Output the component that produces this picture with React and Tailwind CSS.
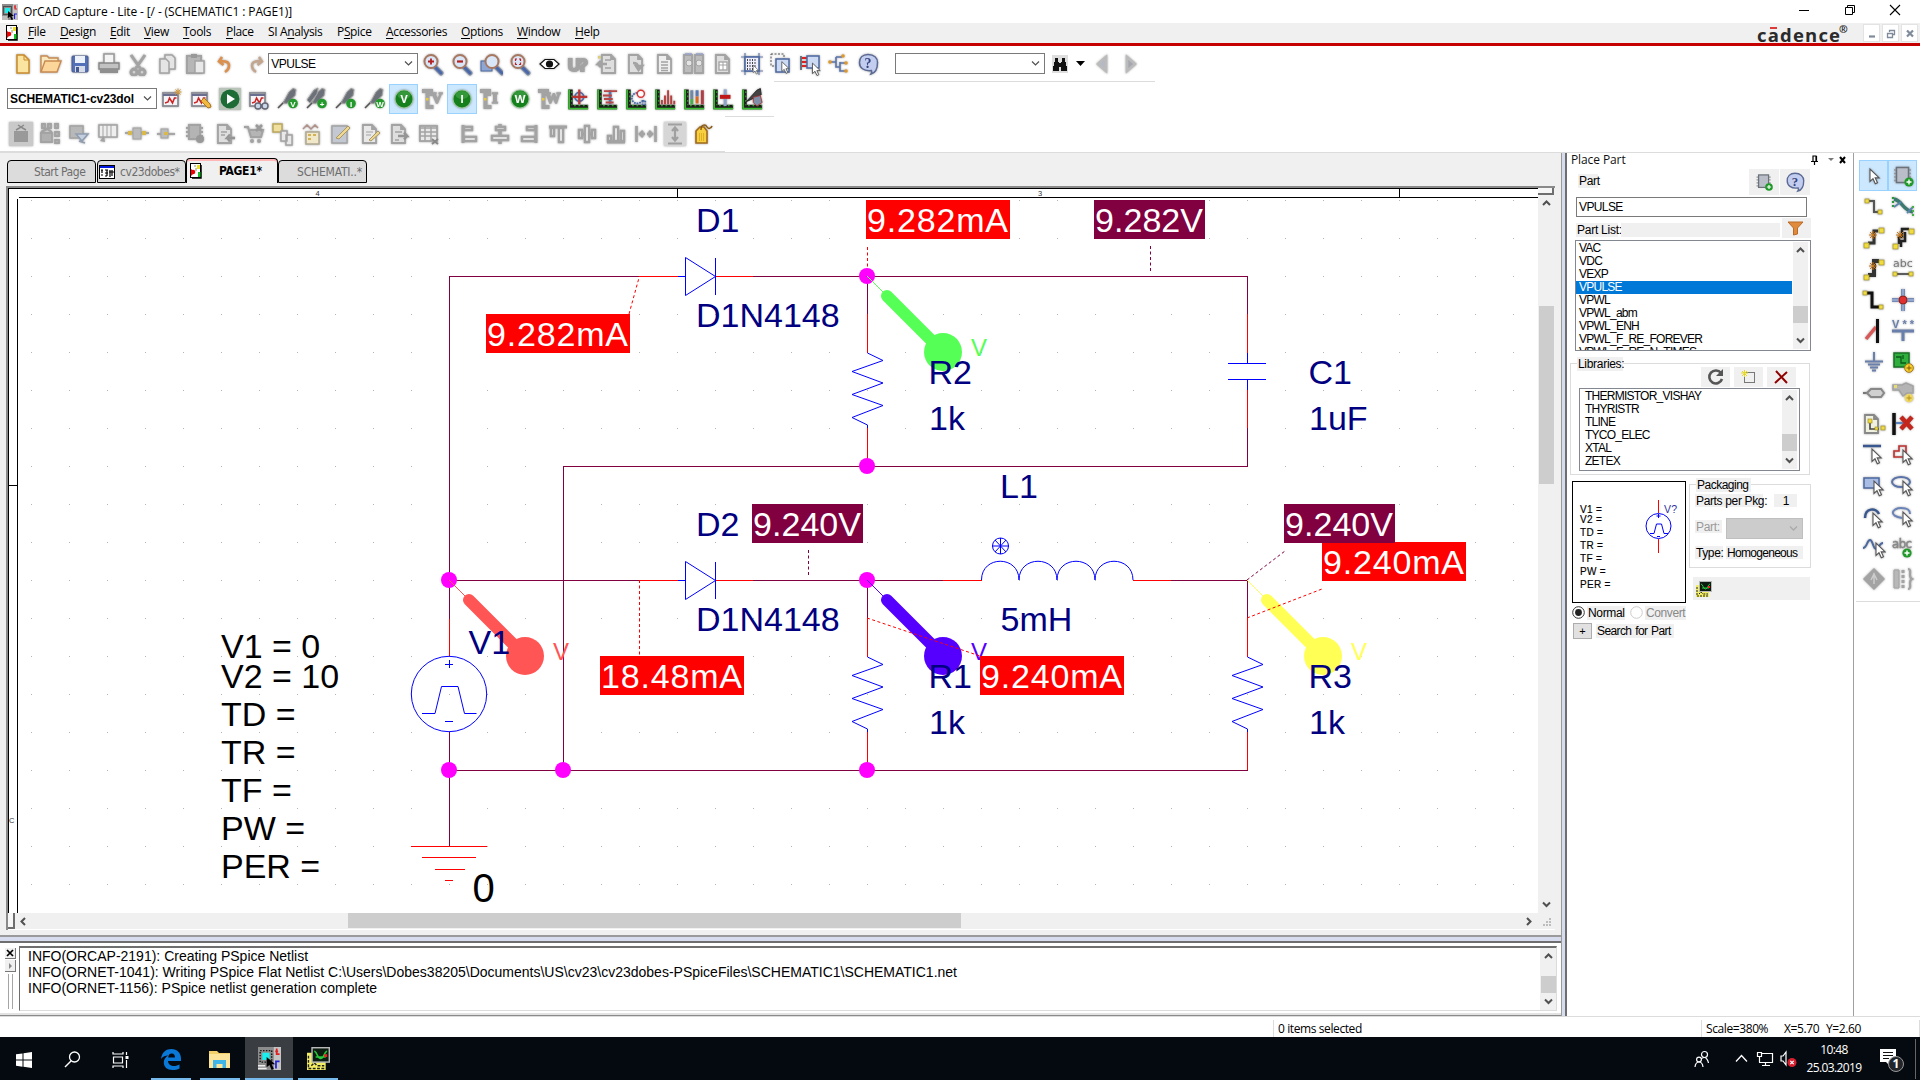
import React from "react";

const G = "#a3a3a3";
const L = "#d0d0d0";

function Svg({ w = 24, h = 24, children, className = "" }) {
  return (
    <svg width={w} height={h} viewBox={`0 0 ${w} ${h}`} fill="none" className={`block shrink-0 ${className}`}>
      {children}
    </svg>
  );
}

/* ---------- shared glyph pieces ---------- */
const Page = ({ f = "#dedede", s = G, x = 0 }) => (
  <path d={`M${5 + x} 3h9l4 4v14h-13zM${14 + x} 3v4h4`} fill={f} stroke={s} strokeWidth="1.800" />
);
const Lens = ({ children }) => (
  <>
    <path d="M14 15l6 6" stroke="#8a94a8" strokeWidth="5" strokeLinecap="round" />
    <path d="M14 15l6 6" stroke="#4a68a8" strokeWidth="3" strokeLinecap="round" />
    <circle cx="10" cy="9.500" r="6.500" fill="#d8e6f8" stroke="#a87860" strokeWidth="2" />
    {children}
  </>
);
const Axes = ({ children }) => (
  <g transform="translate(1 1.500) scale(.88)">
    <path d="M4 1v20H24" stroke="#1c1c1c" strokeWidth="5" />
    <path d="M2.500 1v22H24" stroke="#3db832" strokeWidth="2" />
    <path d="M5.500 3v16M8 19.500h16" stroke="#2fa028" strokeWidth="1.500" strokeDasharray="2 3" />
    {children}
  </g>
);
const Wave = ({ children }) => (
  <>
    <rect x="3" y="6" width="15" height="13" fill="#f4f4f8" stroke="#8b8b93" strokeWidth="1.800" />
    <path d="M3 8h15" stroke="#6a6f8f" strokeWidth="2" />
    <path d="M5 16l3-1 1.500-4 3 5 2-5h2" stroke="#c22" strokeWidth="1.500" />
    {children}
  </>
);
const Probe = ({ t, dbl }) => (
  <>
    <path d="M2 21l9-9" stroke="#555" strokeWidth="1.600" />
    <path d="M7 16l6-11 4-3.500 3 1-1 6-8 8z" fill="#6c7078" stroke="#a0a0a0" />
    {dbl && <path d="M2 13l7-10 4-2-1 6-7 9z" fill="#6c7078" stroke="#a0a0a0" />}
    <circle cx="17" cy="16.500" r="4.800" fill="#259a2c" />
    <text x="17" y="19.500" textAnchor="middle" fontSize="8" fontWeight="bold" fontFamily="Liberation Sans" fill="#fff">{t}</text>
  </>
);
const Ball = ({ t }) => (
  <>
    <circle cx="12" cy="12" r="9.500" fill="#9cc79c" />
    <circle cx="12" cy="12" r="8.500" fill="#15801c" />
    <ellipse cx="12" cy="8" rx="6.500" ry="4" fill="#4aa74f" opacity=".6" />
    <text x="12" y="16" textAnchor="middle" fontSize="11" fontWeight="bold" fontFamily="Open Sans" fill="#fff">{t}</text>
  </>
);
const GrayProbe = ({ t }) => (
  <>
    <path d="M1 4h9v5M6.500 4v16h6" stroke={G} strokeWidth="4" />
    <text x="16" y="16" textAnchor="middle" fontSize="15" fontWeight="bold" fontFamily="Liberation Serif" fill={G} stroke={G} strokeWidth="1.500">{t}</text>
    <rect x="5" y="11" width="2.500" height="2.500" fill="#e8c840" />
  </>
);
const Cursor = ({ x = 10, y = 8 }) => (
  <path transform={`translate(${x} ${y})`} d="M0 0v12.500l3-2.800 2.300 5 2.200-1-2.300-4.800h4z" fill="#fff" stroke="#555" strokeWidth="1.100" />
);
const Chip = () => (
  <>
    <path d="M3 6h17M3 9.500h17M3 13h17M3 16.500h17" stroke="#999" strokeWidth="1.500" />
    <rect x="5.500" y="3.500" width="12" height="15" fill="#b9bec8" stroke="#6c727c" strokeWidth="1.500" />
  </>
);
const Plus = ({ x = 18, y = 18 }) => (
  <>
    <circle cx={x} cy={y} r="4.600" fill="#1f9a28" />
    <path d={`M${x - 2.500} ${y}h5M${x} ${y - 2.500}v5`} stroke="#fff" strokeWidth="1.400" />
  </>
);
const Help = () => (
  <>
    <path d="M12 2.500c6 0 9.500 3.500 9.500 8 0 5-1 10-6.500 11.500 1-1.500 1-2.500.5-3.500-8 1-12-3-12-8 0-4.500 3-8 8.500-8z" fill="#c3cdf0" stroke="#5a6a94" strokeWidth="1.500" />
    <text x="12" y="16" textAnchor="middle" fontSize="14" fontWeight="bold" fontFamily="Liberation Serif" fill="#33457c">?</text>
  </>
);
const Dot = ({ x, y, s = 4 }) => <rect x={x} y={y} width={s} height={s} fill="#f0dc3c" stroke="#a09030" strokeWidth=".7" />;
const Spark = ({ x, y }) => (
  <path d={`M${x - 4} ${y}h8M${x} ${y - 4}v8M${x - 3} ${y - 3}l6 6M${x + 3} ${y - 3}l-6 6`} stroke="#c87818" strokeWidth="1" />
);
const Star = ({ x, y }) => (
  <path d={`M${x - 3.500} ${y}h7M${x} ${y - 3.500}v7M${x - 2.500} ${y - 2.500}l5 5M${x + 2.500} ${y - 2.500}l-5 5`} stroke="#d59a3a" strokeWidth="1" />
);

const row1a = [
  <><path d="M7 3h7l5 5v13H7z" fill="#fbe3a0" stroke="#c98a2a" strokeWidth="1.500" /><path d="M14 3v5h5" stroke="#c98a2a" /></>,
  <><path d="M2 20V4h6l2 2h9v4" fill="#f8e8c0" stroke="#c88a50" strokeWidth="1.400" /><path d="M2 20l4-11h16l-4 11z" fill="#fcd59a" stroke="#c88a50" strokeWidth="1.400" /></>,
  <><rect x="4" y="4" width="16" height="16" rx="1" fill="#5470b8" stroke="#4a5a8c" /><rect x="7" y="4" width="10" height="7" fill="#eef2fa" /><rect x="7" y="14" width="10" height="6" fill="#d8dce8" /><rect x="8" y="15" width="3" height="5" fill="#44598e" /></>,
  <><path d="M7 11V2h10v9" fill="#f4f4f4" stroke="#999" strokeWidth="1.500" /><path d="M2 11h20v6H2z" fill="#c2c2c2" stroke="#858585" strokeWidth="1.300" /><path d="M3 17h18v4H3z" fill="#8f8f8f" /></>,
  <path d="M5 3l9 13M19 3L10 16M10 18a3 3 0 1 1-4 0 3 3 0 0 1 4 0M18 18a3 3 0 1 1-4 0 3 3 0 0 1 4 0" stroke={G} strokeWidth="3" />,
  <><path d="M10 3h7l3 3v11H10z" fill="#e4e4e4" stroke={G} strokeWidth="1.500" /><path d="M5 7h6l3 3v11H5z" fill="#e4e4e4" stroke={G} strokeWidth="1.500" /></>,
  <><rect x="3" y="4" width="14" height="17" fill="#b6b6b6" stroke={G} strokeWidth="2" /><rect x="7" y="2" width="6" height="4" fill="#999" /><path d="M11 9h9v12h-9z" fill="#e8e8e8" stroke={G} strokeWidth="1.500" /></>,
  <path d="M8 5L5 9.500l4.500 3.500M6 9.500c6-1 9 1 9 4 0 3-1.500 5-4 6.500" stroke="#dd8f4c" strokeWidth="2.600" />,
  <path d="M16 5l3 4.500-4.500 3.500M18 9.500c-6-1-9 1-9 4 0 3 1.500 5 4 6.500" stroke="#c4a68e" strokeWidth="2.400" />,
];
const row1b = [
  <Lens><path d="M7 9.500h6M10 6.500v6" stroke="#b32020" strokeWidth="1.800" /></Lens>,
  <Lens><path d="M7 9.500h6" stroke="#b32020" strokeWidth="2.200" /></Lens>,
  <><rect x="2" y="9" width="11" height="10" fill="#8ea6d4" stroke="#4c68a0" /><g transform="translate(3 0)"><Lens /></g></>,
  <Lens><path d="M7.500 9V7H9M11 7h1.500v2M7.500 10.500v2H9M12.500 10.500v2H11" stroke="#c02020" strokeWidth="1.200" /></Lens>,
  <><path d="M3 12l5-4.500h9L22 12l-5 4.500H8z" fill="#fff" stroke="#111" strokeWidth="1.200" /><circle cx="12.500" cy="12" r="3.600" fill="#111" /></>,
  <text x="12" y="19" textAnchor="middle" fontSize="17" fontWeight="bold" fontFamily="Liberation Sans" fill={G} stroke={G} strokeWidth="2.200" textLength="20">U?</text>,
  <><Page x={2} /><path d="M12 12H3l3-3M3 12l3 3" stroke={G} strokeWidth="2.500" /><rect x="3" y="4" width="2.500" height="2.500" fill="#dcd070" /><path d="M10 8h6M10 16h6" stroke={G} strokeWidth="1.600" /></>,
  <><Page /><path d="M9 11c4 0 5 1 5 4M12 14h6l-3.500 4z" stroke={G} fill={G} strokeWidth="2.500" /></>,
  <><Page f="#eee" /><path d="M8 10h7M8 13h7M8 16h7M8 18.500h7" stroke={G} strokeWidth="1.300" /></>,
  <><path d="M2 3h8v18H2zM13 3h8v18h-8z" fill="#bcbcbc" stroke={G} strokeWidth="1.800" /><path d="M3 2h7M14 2h7" stroke="#98a4cc" strokeWidth="1.500" /><circle cx="7" cy="11" r="3" fill="#e4e4e4" stroke={G} /><circle cx="17" cy="11" r="3" fill="#e4e4e4" stroke={G} /></>,
  <><Page /><rect x="8" y="10" width="8" height="8" fill="#fff" stroke={G} strokeWidth="1.300" /><path d="M8 13h8M12 10v8" stroke={G} /></>,
  <><path d="M5 1v22M19 1v22M1 5h22M1 19h22" stroke="#6a7fae" strokeWidth="1.200" /><rect x="5" y="5" width="14" height="14" fill="#eef" stroke="#4c68a0" strokeWidth="1.600" /><path d="M7 8h10M7 11h10M7 14h10M7 17h10" stroke="#111" strokeWidth="1.400" strokeDasharray="1 1.500" /><g transform="scale(.6)"><Cursor x={22} y={22} /></g></>,
  <><rect x="2" y="2" width="13" height="12" stroke="#555" strokeDasharray="2 1.500" /><rect x="7" y="7" width="13" height="13" fill="#ccdaf4" stroke="#4c68a0" strokeWidth="1.500" /><g transform="scale(.8)"><Cursor x={16} y={12} /></g></>,
  <><path d="M3 4v14" stroke="#456" strokeWidth="1.500" /><path d="M4 6h5M4 10h5M4 14h5" stroke="#d22" strokeWidth="2" /><rect x="9" y="4" width="12" height="12" fill="#ccdaf4" stroke="#4c68a0" strokeWidth="1.500" /><g transform="scale(.85)"><Cursor x={17} y={13} /></g></>,
  <><path d="M2 10h7M9 5v10h4M9 5h6M13 10v9h6M13 11h6" stroke="#5a74aa" strokeWidth="1.600" /><g fill="#e0982a"><circle cx="3" cy="10" r="1.800" /><circle cx="16" cy="4" r="1.800" /><circle cx="19" cy="11" r="1.800" /><circle cx="19" cy="19" r="1.800" /></g></>,
  <Help />,
];
const row2 = [
  <><Wave /><Star x={18} y={5} /></>,
  <><Wave /><path d="M12 14l7 7 3-1-1-3-6-6z" fill="#f0b840" stroke="#b07818" /></>,
  <><rect x="1" y="1" width="22" height="22" fill="#b9c4b9" /><circle cx="12" cy="12" r="9.500" fill="#1d6b35" /><path d="M9 7v10l8-5z" fill="#fff" /></>,
  <><Wave /><path d="M8 19a3 3 0 1 0 6 0 3 3 0 1 0-6 0M15 19a3 3 0 1 0 6 0 3 3 0 1 0-6 0" fill="#c8d8e8" stroke="#667" strokeWidth="1.400" /></>,
  <Probe t="V" />,
  <Probe t="+" dbl />,
  <Probe t="I" />,
  <Probe t="W" />,
  <Ball t="V" />,
  <GrayProbe t="V" />,
  <Ball t="I" />,
  <GrayProbe t="I" />,
  <Ball t="W" />,
  <GrayProbe t="W" />,
  <Axes><circle cx="14" cy="9.500" r="5" stroke="#4a6aa8" strokeWidth="2" /><path d="M14 1v17M6 9.500h17" stroke="#b33" strokeWidth="2.600" /></Axes>,
  <Axes><path d="M16 2v16" stroke="#5a74aa" strokeWidth="3" /><path d="M9 3h15M8 8h10M9 12h10M11 16h9" stroke="#b84848" strokeWidth="2.200" /></Axes>,
  <Axes><path d="M14 5a6 6 0 1 0 5 9M20 14v4h3v-4z" stroke="#4a6aa8" strokeWidth="2" strokeDasharray="2 1" /><circle cx="18" cy="6" r="4" fill="#fff" stroke="#d33" strokeWidth="1.600" /></Axes>,
  <Axes><path d="M9 18v-5M12.500 18V8M16 18V2M19.500 18V8M23 18v-4" stroke="#b84040" strokeWidth="2.200" /></Axes>,
  <Axes><path d="M10 2v10" stroke="#7088a8" strokeWidth="3.400" /><path d="M10 12v6" stroke="#48b048" strokeWidth="3.400" /><path d="M16 2v7" stroke="#5a78b0" strokeWidth="3.400" /><path d="M16 9v8" stroke="#d86a20" strokeWidth="3.400" /><path d="M22 2v16" stroke="#b04048" strokeWidth="3.400" /></Axes>,
  <Axes><path d="M15 1v19" stroke="#8fa4c8" strokeWidth="3.400" /><path d="M9 9.500h12" stroke="#c01818" strokeWidth="4.500" /></Axes>,
  <Axes><path d="M6 15L18 2l4-2 1 7z" fill="#444" stroke="#222" /><path d="M14 10l8-2 2 8-6 4-4-4z" fill="#7f8fa8" stroke="#a33" /></Axes>,
];
const row3a = [
  <><rect x="0" y="0" width="24" height="24" fill="#c9c9c9" /><rect x="5" y="9" width="14" height="11" fill="#999" /><path d="M7 8l5-3 5 3M9 3l6 4M15 3L9 7" stroke="#888" strokeWidth="1.500" /></>,
  <><path d="M4 2h3v4H4zM10 2h3v4h-3zM17 2h3v4h-3zM17 10h4v4h-4zM17 18h4v3h-4zM3 11h11v9H3z" fill="#b0b0b0" stroke={G} strokeWidth="1.800" /><path d="M3 10l6-3 5 3" stroke={G} strokeWidth="2" /></>,
  <><rect x="3" y="4" width="13" height="12" fill="#b8b8b8" stroke={G} strokeWidth="1.500" /><path d="M9 12h12l-6 7zM12 19l6 2" fill="#c4d0e0" stroke="#8f9db0" strokeWidth="1.500" /></>,
  <><path d="M3 3h18v12H3z" fill="#eee" stroke={G} strokeWidth="1.500" /><path d="M7 3v12M11 3v12M15 3v12" stroke={G} /><path d="M8 14l-4 5 5 1z" fill={G} /></>,
  <><path d="M0 11h24" stroke={G} strokeWidth="1.800" /><rect x="8" y="6" width="8" height="11" fill="#bbb" stroke={G} /><rect x="3" y="9" width="4" height="4" fill="#d9b94a" /><rect x="17" y="9" width="4" height="4" fill="#d9b94a" /></>,
  <><path d="M3 12h18" stroke={G} strokeWidth="1.800" /><rect x="7" y="7" width="7" height="9" fill="#bbb" stroke={G} /><rect x="10" y="10" width="4" height="3" fill="#d9b94a" /></>,
  <><path d="M3 6h17M3 10h17M3 14h17" stroke={G} strokeWidth="2" /><rect x="6" y="3" width="11" height="14" fill="#b4b4b4" stroke={G} strokeWidth="2" /><circle cx="17" cy="17" r="4" fill="#999" /></>,
  <><Page /><path d="M8 10h6M8 13h4" stroke={G} strokeWidth="1.500" /><path d="M22 16h-8l3-3.500M14 16l3 3.500" stroke="#959595" strokeWidth="2.500" /></>,
  <><path d="M2 5h4l3 10h10l2-7H8" fill="#b5b5b5" stroke={G} strokeWidth="2" /><path d="M14 3l6 6M20 3l-6 6" stroke="#999" strokeWidth="2.500" /><circle cx="10" cy="19" r="2" fill={G} /><circle cx="17" cy="19" r="2" fill={G} /></>,
  <><path d="M2 2h9v8H2z" fill="#f0e0a0" stroke="#bba85c" strokeWidth="1.500" /><path d="M10 9h6v10h-6zM15 13h6v10h-6z" fill="#e8e8e8" stroke={G} strokeWidth="1.500" /></>,
  <><path d="M3 7l4-4 4 4 4-4 3 3" stroke="#b09088" strokeWidth="1.500" /><rect x="6" y="10" width="13" height="12" fill="#f0e8c8" stroke="#b0a890" strokeWidth="1.500" /><path d="M8 13h3M8 17h3M13 13h3" stroke="#c8a030" strokeWidth="1.500" /></>,
  <><rect x="3" y="4" width="15" height="17" fill="#c3c8d3" stroke={G} strokeWidth="1.500" /><path d="M7 16L19 4l2 2L10 17z" fill="#f0d890" stroke="#a89868" /></>,
  <><Page f="#e8e8e8" /><path d="M8 10h7M8 13h5" stroke={G} /><path d="M11 18l9-9 2 2-9 8z" fill="#f0d890" stroke="#a89868" /></>,
  <><Page /><path d="M8 10h7M8 18h4" stroke={G} strokeWidth="1.500" /><path d="M11 14h9l-3-3.500M20 14l-3 3.500" stroke="#959595" strokeWidth="2.500" /></>,
  <><rect x="3" y="4" width="17" height="15" fill="#e8e8e8" stroke={G} strokeWidth="1.800" /><path d="M3 6h17M3 10h17M3 14h17M8 5v14M14 5v14" stroke={G} strokeWidth="1.500" /><path d="M15 17l6 5M21 17l-6 5" stroke="#888" strokeWidth="1.800" /></>,
];
const bars = { fill: "#f4f4f4", stroke: G, strokeWidth: 2.4 };
const row3b = [
  <><path d="M4 3v18" stroke={G} strokeWidth="3" /><path d="M5 5h8v3H5zM5 15h12v4H5z" {...bars} /></>,
  <><path d="M12 2v20" stroke={G} strokeWidth="3.500" /><path d="M8 5h9v3H8zM4 14h16v4H4z" {...bars} /></>,
  <><path d="M19 3v18" stroke={G} strokeWidth="3" /><path d="M10 5h8v3h-8zM5 15h13v4H5z" {...bars} /></>,
  <><path d="M3 5h18" stroke={G} strokeWidth="3" /><path d="M5 6h3v8H5zM13 6h4v14h-4z" {...bars} /></>,
  <><path d="M3 12h18" stroke={G} strokeWidth="3" /><path d="M4 8h3v8H4zM10 4h4v16h-4zM17 8h3v8h-3z" {...bars} /></>,
  <><path d="M3 20h18" stroke={G} strokeWidth="3" /><path d="M4 14h3v5H4zM10 5h4v14h-4zM17 9h3v10h-3z" {...bars} /></>,
  <path d="M2.500 4v16M21.500 4v16M6 12h5M13 12h5M9 9l-3 3 3 3M15 9l3 3-3 3" stroke={G} strokeWidth="2.600" />,
  <><rect x="1" width="22" height="24" fill="#d6d6d6" /><path d="M5 2.500h14M5 21.500h14M12 6v12M9 9l3-3.500L15 9M9 15l3 3.500 3-3.500" stroke="#a0a0a0" strokeWidth="2.200" /></>,
  <><path d="M4 21V9l4-4h4l3 4v12z" fill="#f7d042" stroke="#a06a1c" strokeWidth="1.600" /><path d="M7.500 11v8M9.500 11v8M11.500 11v8" stroke="#e0b020" /><path d="M9 8c0-7 5-5 6-3s4 2 5-1" stroke="#8a5a10" strokeWidth="1.500" /></>,
];

const palette = [
  <Cursor x={8} y={5} />,
  <><Chip /><Plus x={18} y={18} /></>,
  <><path d="M6 6h6v11h6" stroke="#555" strokeWidth="2" /><Dot x={3} y={4} /><Dot x={16} y={15} /></>,
  <><path d="M2 2v12" stroke="#2a9a3a" strokeWidth="2.200" strokeDasharray="2 2" /><path d="M3 4c9 2 8 11 19 13" stroke="#3a7a70" strokeWidth="3.500" /><path d="M3 12l7-5M16 18l6-6" stroke="#5a84b0" strokeWidth="1.800" /><path d="M22 11v12" stroke="#4ab04a" strokeWidth="2" strokeDasharray="2 2" /></>,
  <><path d="M16 5h-4v12H6" stroke="#333" strokeWidth="3" /><Spark x={11} y={9} /><Dot x={17} y={2} s={5} /><Dot x={2} y={17} s={5} /></>,
  <><path d="M18 3h-7v8H8v7M14 6v9h-4v6" stroke="#222" strokeWidth="2.500" /><Spark x={9} y={9} /><Dot x={18} y={3} s={5} /><Dot x={2} y={18} s={5} /></>,
  <><path d="M17 4h-5v14H6" stroke="#333" strokeWidth="4" /><Spark x={11} y={9} /><Dot x={17} y={3} s={5} /><Dot x={2} y={18} s={5} /></>,
  <><text x="12" y="10" textAnchor="middle" fontSize="11" fontFamily="DejaVu Sans" fill="#777">abc</text><path d="M4 17h16" stroke="#333" strokeWidth="1.500" /><Dot x={2} y={15} /><Dot x={18} y={15} /></>,
  <><path d="M4 5h6v14h7" stroke="#111" strokeWidth="3" /><Dot x={1} y={3} /><Dot x={17} y={17} /></>,
  <><path d="M12 1v22M1 12h22" stroke="#5a74aa" strokeWidth="3.500" /><path d="M12 1v22M1 12h22" stroke="#c8d8f0" strokeWidth="1" /><circle cx="12" cy="12" r="4" fill="#e03030" stroke="#902020" /></>,
  <><path d="M4 20L14 8" stroke="#d85858" strokeWidth="3.500" /><path d="M15.500 0v24" stroke="#111" strokeWidth="3" /></>,
  <><text x="12" y="9" textAnchor="middle" fontSize="11" fontWeight="bold" fontFamily="Liberation Sans" fill="#6a80ac" textLength="22">V**</text><path d="M1 12h22M12 12v10" stroke="#6a80ac" strokeWidth="3" /></>,
  <><path d="M12 2v9M3 11.500h18M6 14.500h12M8 17.500h8M10 20.500h4" stroke="#6a80ac" strokeWidth="2" /></>,
  <><rect x="3" y="3" width="15" height="14" fill="#2fae3d" stroke="#187024" strokeWidth="1.500" /><path d="M5 7h5v6h5M12 5v4" stroke="#0a5a18" strokeWidth="1.300" /><circle cx="18" cy="18" r="4.300" fill="#f7d030" stroke="#a87810" /><path d="M15.500 18h5M18 15.500v5" stroke="#805800" /></>,
  <><path d="M1 12h5" stroke="#777" strokeWidth="2" /><path d="M5 12l4-4h10l3 4-3 4H9z" fill="#d0d0d0" stroke="#888" strokeWidth="2" /></>,
  <><path d="M2 4h9l4-2 7 3v7h-6l-4 3-4-6H2z" fill="#b4b4b4" stroke={G} strokeWidth="1.500" /><rect x="3" y="4" width="3" height="3" fill="#e8dc70" /><circle cx="18" cy="17" r="4.300" fill="#f0d860" /><path d="M15.500 17h5M18 14.500v5" stroke="#b09020" /></>,
  <><Page f="#f0f0e0" s="#888" x={-2} /><path d="M8 9v8h9" stroke="#444" strokeWidth="1.600" /><Dot x={6} y={7} /><Dot x={13} y={15} s={3} /><Dot x={19} y={14} /></>,
  <><path d="M3 1v22" stroke="#111" strokeWidth="3.500" /><path d="M5 11h7" stroke="#5a84c0" strokeWidth="2" /><path d="M10 5l11 12M21 5L10 17" stroke="#c2261c" strokeWidth="4.500" /></>,
  <><path d="M1 3h18" stroke="#3a5890" strokeWidth="2.500" /><Cursor x={10} y={6} /></>,
  <><path d="M8 3h7v11H3V8h5z" stroke="#c03030" strokeWidth="1.600" /><Cursor x={12} y={7} /></>,
  <><rect x="2" y="4" width="15" height="10" fill="#a9bde4" stroke="#4c68a0" strokeWidth="1.500" /><Cursor x={12} y={7} /></>,
  <><ellipse cx="10" cy="8" rx="9" ry="5" stroke="#5a74aa" strokeWidth="2" /><Cursor x={12} y={7} /></>,
  <><path d="M3 13C3 3 14 2 17 9" stroke="#3a5890" strokeWidth="2.500" /><Cursor x={11} y={8} /></>,
  <><path d="M11 13C-3 11 1 3 10 3s9 4 9 6" stroke="#6a84ba" strokeWidth="2" /><Cursor x={12} y={7} /></>,
  <><path d="M1 12c4 0 4-8 7-8s3 9 6 9 3-6 7-6" stroke="#4c68a0" strokeWidth="2" /><Cursor x={14} y={7} /></>,
  <><text x="11" y="12" textAnchor="middle" fontSize="13" fontFamily="DejaVu Sans Condensed, DejaVu Sans" fill="#888" stroke="#888" strokeWidth=".5" textLength="20">abc</text><Plus x={16} y={17} /></>,
  <><path d="M12 1l11 11-11 11L1 12z" fill={G} /><path d="M12 6v11M9 13l3-6 3 6" stroke="#ccc" strokeWidth="1.500" /></>,
  <><path d="M3 3h5v18H3z" fill="#b8b8b8" stroke={G} /><path d="M12 3v18" stroke={G} strokeWidth="3" strokeDasharray="3 2" /><path d="M17 2c3 0 2 3 2 6 0 2 0 3 2 4-2 1-2 2-2 4 0 3 1 6-2 6" stroke={G} strokeWidth="2.200" /></>,
];

function Icons({ list, hl = [], cell = "w-[29.15px]" }) {
  return (
    <div className="flex">
      {list.map((ic, i) => (
        <div
          key={i}
          className={`flex h-[30px] shrink-0 items-center justify-center ${cell} ${hl.includes(i) ? "border border-[#99d1ff] bg-[#cce8ff]" : ""}`}
        >
          <Svg className="drop-shadow-[0_0_1px_rgba(90,90,90,0.55)]">{ic}</Svg>
        </div>
      ))}
    </div>
  );
}

const Chevron = ({ d = "down", c = "#505050", w = 2 }) => (
  <svg width="9" height="9" viewBox="0 0 9 9" fill="none" className="block shrink-0">
    <path d={{ down: "M1 2.500l3.500 3.500L8 2.500", up: "M1 6l3.500-3.500L8 6", left: "M6 1L2.500 4.500 6 8", right: "M3 1l3.500 3.500L3 8" }[d]} stroke={c} strokeWidth={w} />
  </svg>
);

function Combo({ children, className = "" }) {
  return (
    <div className={`flex h-[21px] w-[150px] shrink-0 items-center justify-between border border-[#7a7a7a] bg-white pr-1 pl-[2px] ${className}`}>
      <span className="whitespace-nowrap">{children}</span>
      <Chevron w={1.2} />
    </div>
  );
}

/* ---------- schematic ---------- */
const W = "#800040";
const R = "#ff0000";
const B = "#0000ff";
const Seg = ({ d, c = W, dash }) => (
  <path d={d} stroke={c} strokeDasharray={dash} fill="none" shapeRendering="crispEdges" />
);
const Resistor = ({ x, y }) => (
  <g transform={`translate(${x} ${y})`}>
    <Seg d="M.5 0v38" />
    <Seg d="M.5 38v39M.5 152v38" c={R} />
    <path d="M.5 77l15.500 7.500-31 11 31 11.500-31 11.500 31 11-31 12L.5 149v3" stroke={B} fill="none" />
  </g>
);
const Diode = ({ y }) => (
  <g transform={`translate(0 ${y})`}>
    <Seg d="M639 .5h39M716 .5h37" c={R} />
    <Seg d="M678 .5h7M715.500-18.500v37" c={B} />
    <path d="M685.500-18.500v38l30-19z" stroke={B} fill="none" />
  </g>
);
const Marker = ({ x, y, c }) => (
  <g transform={`translate(${x} ${y})`}>
    <path d="M0 0l20 20" stroke={c} />
    <path d="M20 20l50 50" stroke={c} strokeWidth="12" strokeLinecap="round" />
    <circle cx="76" cy="76" r="19" fill={c} />
    <text x="104" y="80" fontSize="24" fill={c} textLength="15">V</text>
  </g>
);
const Tag = ({ x, y, w, c, children }) => (
  <g>
    <rect x={x} y={y} width={w} height="39" fill={c} />
    <text x={x + 1} y={y + 32} fill="#fff" textLength={w - 3}>{children}</text>
  </g>
);
const Name = ({ x, y, children, c = "#000080" }) => (
  <text x={x} y={y} fill={c}>{children}</text>
);

function Schematic() {
  return (
    <svg width="1530" height="725" viewBox="8 188 1530 725" className="block shrink-0 bg-white" fontFamily="'Liberation Sans', Arial, sans-serif" fontSize="34">
      <defs>
        <pattern id="dots" x="31" y="200" width="38" height="38" patternUnits="userSpaceOnUse">
          <rect width="1" height="1" fill="#b4b4b4" />
        </pattern>
      </defs>
      <rect x="18" y="199" width="1520" height="714" fill="url(#dots)" />
      <Seg c="#000" d="M8 188.500h1530M19 197.500h1519M8.500 188v725M17.500 199v714M677.500 188v9M1399.500 188v9M8 485.500h9" />
      <g fontSize="7.500" fill="#333">
        <text x="315.500" y="195.500">4</text>
        <text x="1038" y="195.500">3</text>
        <text x="9" y="823">C</text>
      </g>

      <Seg d="M449 276.500h190M753 276.500h494.500v38M1247.500 428v38.500H563.500v304M449.500 276v343M449.500 732v115M449 580.500h190M753 580.500h190M1171 580.500h76M449 770.500h799" />
      <Diode y={276} />
      <Diode y={580} />
      <Seg c={R} d="M449.500 619v37M1247.500 314v39M1247.500 390v38M943 580.500h39M1133 580.500h38" />
      <Seg c={B} d="M1247.500 353v10.500M1228 363.500h38M1228 379.500h38M1247.500 380v10" />
      <Resistor x={867} y={276} />
      <Resistor x={867} y={580} />
      <Resistor x={1247} y={580} />

      <g stroke={B} fill="none">
        <circle cx="449" cy="694" r="37.700" />
        <path d="M445 664.500h8M449.500 660v8M445 721.500h8M422 713.500h13l6.500-27h16.500l6.500 27h12" />
        <path d="M981.500 580c0-25 37.500-25 37.500 0c0-25 38-25 38 0c0-25 38-25 38 0c0-25 38-25 38 0" />
        <circle cx="1000.500" cy="546" r="8" />
        <path d="M992 546h17M1000.500 538v16M995 540l11 12M1006 540l-11 12" />
      </g>
      <Seg c={R} d="M411 846.500h76M422 857.500h54M435 869.500h30M445 880.500h8" />

      {[[867, 276], [867, 466], [449, 580], [867, 580], [449, 770], [563, 770], [867, 770]].map(([x, y]) => (
        <circle key={`${x}-${y}`} cx={x} cy={y} r="8" fill="#ff00ff" />
      ))}

      <Marker x={867} y={276} c="#55ff55" />
      <Marker x={449} y={580} c="#ff5555" />
      <Marker x={867} y={580} c="#5500ff" />
      <Marker x={1247} y={580} c="#ffff55" />

      <g fill="none" strokeDasharray="3 2.500" stroke={R}>
        <path d="M867.500 247v21M629 314l10.500-38M639.500 580v76M867 618l113 38M1247 618l75-29" />
        <path d="M1150.500 246v27M808.500 550v27M1247 580l38-29" stroke={W} />
      </g>

      <Name x={696} y={232}>D1</Name>
      <Name x={696} y={327}>D1N4148</Name>
      <Name x={928.500} y={384}>R2</Name>
      <Name x={929} y={430}>1k</Name>
      <Name x={1308.500} y={384}>C1</Name>
      <Name x={1309} y={430}>1uF</Name>
      <Name x={1000} y={498}>L1</Name>
      <Name x={696} y={536}>D2</Name>
      <Name x={696} y={631}>D1N4148</Name>
      <Name x={1000.500} y={631}>5mH</Name>
      <Name x={928.500} y={688}>R1</Name>
      <Name x={929} y={734}>1k</Name>
      <Name x={1308.500} y={688}>R3</Name>
      <Name x={1309} y={734}>1k</Name>
      <Name x={468.500} y={654}>V1</Name>
      <Name c="#000" x={221} y={658}>V1 = 0</Name>
      <Name c="#000" x={221} y={688}>V2 = 10</Name>
      <Name c="#000" x={221} y={726}>TD =</Name>
      <Name c="#000" x={221} y={764}>TR =</Name>
      <Name c="#000" x={221} y={802}>TF =</Name>
      <Name c="#000" x={221} y={840}>PW =</Name>
      <Name c="#000" x={221} y={878}>PER =</Name>
      <text x="472.500" y="902" fontSize="40">0</text>

      <Tag x={866} y={200} w={144} c={R}>9.282mA</Tag>
      <Tag x={1094} y={200} w={111} c={W}>9.282V</Tag>
      <Tag x={486} y={314} w={144} c={R}>9.282mA</Tag>
      <Tag x={752} y={504} w={111} c={W}>9.240V</Tag>
      <Tag x={600} y={656} w={144} c={R}>18.48mA</Tag>
      <Tag x={1322} y={542} w={144} c={R}>9.240mA</Tag>
      <Tag x={1284} y={504} w={111} c={W}>9.240V</Tag>
      <Tag x={980} y={656} w={144} c={R}>9.240mA</Tag>
    </svg>
  );
}

/* ---------- place part ---------- */
const Lbl = ({ children, className = "" }) => (
  <span className={`block shrink-0 bg-[#f0f0f0] pl-px leading-[14px] whitespace-nowrap ${className}`}>{children}</span>
);

function ListBox({ items, sel, className, thumb, first }) {
  return (
    <div className={`flex overflow-hidden border border-[#828790] bg-white ${className}`}>
      <div className={`flex-1 overflow-hidden tracking-[-0.75px] ${first}`}>
        {items.map((t) => (
          <div key={t} className={`h-[13px] pl-[3px] leading-[13px] whitespace-nowrap ${t === sel ? "bg-[#0078d7] text-white" : ""}`}>
            {t}
          </div>
        ))}
      </div>
      <div className="my-px mr-[2px] ml-px flex w-[15px] flex-col items-center justify-between bg-[#f0f0f0] py-1">
        <Chevron d="up" />
        <div className={`h-[17px] w-full bg-[#cdcdcd] ${thumb}`} />
        <Chevron />
      </div>
    </div>
  );
}

const Btn = ({ children, className = "" }) => (
  <div className={`flex shrink-0 items-center justify-center bg-[#f0f0f0] ${className}`}>{children}</div>
);

const ScopeIcon = ({ s = 16 }) => (
  <svg width={s} height={s} viewBox="0 0 16 16" fill="none" className="block shrink-0">
    <rect x="0" y="4" width="13" height="12" fill="#f4ee62" />
    <path d="M1 6v9h11M3 13l2-2 2 2h5" stroke="#222" strokeDasharray="2 1" />
    <rect x="3.500" y=".5" width="12" height="10" fill="#0d1c10" stroke="#b8b8b8" />
    <path d="M5 3c2 0 2 5 4.500 5S12 3 14 3M6 7h7" stroke="#28c83c" />
    <rect x="12" y="5" width="2" height="2" fill="#e22" />
  </svg>
);

function PlacePart() {
  return (
    <div className="flex w-[286px] shrink-0 flex-col bg-white font-['Liberation_Sans'] text-[12px] text-black">
      <div className="flex h-[14px] items-center pl-1 font-['Open_Sans'] text-[12px] leading-[13px] tracking-[-0.1px] text-[#111]">
        <span className="-mt-px w-[238px]">Place Part</span>
        <Svg w={14} h={12}><path d="M2 7.500h7M4 7V2h3v5M5.500 8v3M7.500 2v5" stroke="#000" strokeWidth="1.200" /></Svg>
        <Svg w={15} h={12}><path d="M5 4h6L8 7z" fill="#777" /></Svg>
        <Svg w={10} h={12}><path d="M2 3l5 6M7 3L2 9" stroke="#000" strokeWidth="2" /></Svg>
      </div>
      <div className="mt-[2px] flex h-[26px] items-start pl-[11px]">
        <Lbl className="mt-[5px] w-[20px] tracking-[-0.3px]">Part</Lbl>
        <Btn className="ml-[151px] h-[26px] w-[30px]"><svg width="20" height="20" viewBox="0 0 24 24" fill="none"><Chip /><Plus x={18} y={18} /></svg></Btn>
        <Btn className="ml-px h-[26px] w-[30px]"><svg width="22" height="22" viewBox="0 0 24 24" fill="none"><Help /></svg></Btn>
      </div>
      <div className="mt-[2px] ml-[9px] h-[20px] w-[231px] border border-[#7a7a7a] pl-[2px] leading-[18px] tracking-[-0.6px]">VPULSE</div>
      <div className="mt-px flex h-[20px] pl-[9px]">
        <Lbl className="mt-[5px] h-[14px] w-[42px] tracking-[-0.25px]">Part List:</Lbl>
        <div className="mt-[5px] ml-[3px] h-[14px] w-[159px] bg-[#f0f0f0]" />
        <Btn className="ml-[2px] h-[20px] w-[29px] pr-[3px]">
          <Svg w={17} h={17}><path d="M1 2h15l-5.500 6v6l-4 1V8z" fill="#e08a3c" stroke="#b86a28" /></Svg>
        </Btn>
      </div>
      <ListBox
        className="mt-[2px] ml-[8px] h-[111px] w-[236px] shrink-0"
        first="pt-px"
        thumb="mt-[38px]"
        sel="VPULSE"
        items={["VAC", "VDC", "VEXP", "VPULSE", "VPWL", "VPWL_abm", "VPWL_ENH", "VPWL_F_RE_FOREVER", "VPWL_F_RE_N_TIMES"]}
      />
      <div className="relative mt-[12px] ml-[3px] h-[112px] w-[240px] shrink-0 border border-[#dcdcdc]">
        <Lbl className="absolute -top-[7px] left-[6px] w-[46px] pl-[2px] tracking-[-0.3px]">Libraries:</Lbl>
        <div className="flex gap-[4px] pt-[3px] pl-[130px]">
          <Btn className="h-[20px] w-[29px]"><Svg w={18} h={18}><path d="M14 5a6.500 6.500 0 1 0 1 6" stroke="#555" strokeWidth="2.600" /><path d="M16 1v7h-7z" fill="#555" /></Svg></Btn>
          <Btn className="h-[20px] w-[29px]"><Svg w={16} h={16}><path d="M3.500 3.500h10v10h-10z" stroke="#000" strokeDasharray="1 1" /><path d="M0 4h7M3.500 1v7M1 2l5 5M6 2L1 7" stroke="#e8d820" /></Svg></Btn>
          <Btn className="h-[20px] w-[29px]"><Svg w={16} h={16}><path d="M2 2l11 12M13 3L1 14" stroke="#900000" strokeWidth="2" /></Svg></Btn>
        </div>
        <ListBox
          className="mt-px ml-[8px] h-[83px] w-[221px] pl-[2px]"
          first="pt-px"
          thumb="mt-[26px]"
          items={["THERMISTOR_VISHAY", "THYRISTR", "TLINE", "TYCO_ELEC", "XTAL", "ZETEX"]}
        />
      </div>
      <div className="mt-[6px] flex">
        <div className="ml-[5px] w-[115px]">
          <svg width="114" height="122" viewBox="0 0 114 122" className="block" fontFamily="Liberation Sans" fontSize="10" letterSpacing=".3">
            <rect x=".5" y=".5" width="113" height="121" fill="#fff" stroke="#000" />
            {[["V1 =", 32], ["V2 =", 42], ["TD =", 55], ["TR =", 68], ["TF =", 81], ["PW =", 94], ["PER =", 107]].map(([t, y]) => (
              <text key={t} x="8" y={y} fill="#000" stroke="#000" strokeWidth=".15">{t}</text>
            ))}
            <path d="M86.500 19v13M86.500 58v14" stroke={R} />
            <g stroke={B} fill="none">
              <circle cx="86.500" cy="45" r="12.500" />
              <path d="M78 52.500h4l2.500-9.500h5l2.500 9.500h4M84.500 35h4M86.500 33v4M85 55.500h3" />
            </g>
            <text x="92" y="32" fontSize="10.500" fill="#3030a0">V?</text>
          </svg>
          <div className="mt-[2px] flex h-[15px] items-center">
            <svg width="13" height="13" viewBox="0 0 13 13" className="block shrink-0"><circle cx="6.500" cy="6.500" r="5.800" fill="#fff" stroke="#333" /><circle cx="6.500" cy="6.500" r="3.400" fill="#222" /></svg>
            <Lbl className="ml-[2px] w-[38px] tracking-[-0.35px]">Normal</Lbl>
            <svg width="13" height="13" viewBox="0 0 13 13" className="ml-[5px] block shrink-0"><circle cx="6.500" cy="6.500" r="5.800" fill="#fff" stroke="#ccc" /></svg>
            <Lbl className="ml-[2px] w-[41px] tracking-[-0.4px] text-[#888]">Convert</Lbl>
          </div>
          <div className="mt-[3px] flex h-[16px] items-center">
            <div className="ml-px flex h-[16px] w-[19px] shrink-0 items-center justify-center border border-[#adadad] bg-[#e1e1e1] text-[11px] leading-none">+</div>
            <Lbl className="ml-[4px] w-[78px] tracking-[-0.6px] [word-spacing:1px]">Search for Part</Lbl>
          </div>
        </div>
        <div className="pl-[2px]">
          <div className="relative mt-[3px] h-[84px] w-[122px] border border-[#dcdcdc]">
            <Lbl className="absolute -top-[7px] left-[6px] w-[55px] pl-[2px] tracking-[-0.5px]">Packaging</Lbl>
            <div className="flex pt-[9px] pl-[5px]"><Lbl className="h-[13px] w-[68px] tracking-[-0.35px]">Parts per Pkg:</Lbl><Lbl className="ml-[11px] h-[13px] w-[23px] text-center">1</Lbl></div>
            <div className="mt-[11px] flex pl-[5px]">
              <Lbl className="mt-[2px] h-[13px] w-[27px] tracking-[-0.3px] text-[#999]">Part:</Lbl>
              <div className="ml-[4px] flex h-[21px] w-[77px] items-center justify-end border border-[#bfbfbf] bg-[#cccccc] pr-1"><Chevron c="#aaa" w={1.300} /></div>
            </div>
            <div className="mt-[7px] flex pl-[5px]"><Lbl className="h-[13px] w-[28px] tracking-[-0.4px]">Type:</Lbl><Lbl className="ml-[3px] h-[13px] w-[77px] tracking-[-0.7px]">Homogeneous</Lbl></div>
          </div>
          <div className="mt-[9px] ml-[4px] flex h-[23px] w-[117px] items-center bg-[#f0f0f0] pl-[3px]"><ScopeIcon /></div>
        </div>
      </div>
    </div>
  );
}

/* ---------- header ---------- */
const menus = [
  ["", "F", "ile", "w-[32px]"], ["", "D", "esign", "w-[50px]"], ["", "E", "dit", "w-[34px]"], ["", "V", "iew", "w-[39px]"],
  ["", "T", "ools", "w-[43px]"], ["", "P", "lace", "w-[42px]"], ["SI A", "n", "alysis", "w-[69px]"], ["P", "S", "pice", "w-[49px]"],
  ["", "A", "ccessories", "w-[75px]"], ["", "O", "ptions", "w-[56px]"], ["", "W", "indow", "w-[58px]"], ["", "H", "elp", "w-[40px]"],
];

const CaptureIcon = ({ s = 16 }) => (
  <svg width={s} height={s} viewBox="0 0 16 16" className="block shrink-0" fill="none">
    <rect width="16" height="16" fill="#8c8c8c" />
    <path d="M11 0h5v16h-5z" fill="#c4c4c4" />
    <rect x="1.500" y="2.500" width="8" height="8" stroke="#111" strokeDasharray="1 1" />
    <rect x="3" y="4" width="5" height="5" fill="#18f0f0" />
    <path d="M13 1v4h2M12 3h2" stroke="#e02020" strokeWidth="1.200" />
    <path d="M12.500 15v-5H15" stroke="#2020d0" strokeWidth="1.200" />
    <path d="M6 7v7l2-1.500L9.500 16l1.500-.8L9.500 12H12z" fill="#000" />
    <path d="M0 13h5M0 15h6" stroke="#eee" />
  </svg>
);
const PageIcon = ({ className = "" }) => (
  <svg width="12" height="16" viewBox="0 0 12 16" className={`block shrink-0 ${className}`}>
    <rect x=".5" y=".5" width="10" height="14" fill="#fff" stroke="#000" />
    <path d="M11 2v13H2" stroke="#000" strokeWidth="1.500" fill="none" />
    <path d="M1 6l4 3-4 4z" fill="#e00" /><circle cx="3" cy="9" r="2.300" fill="#e00" />
    <rect x="7" y="2" width="3" height="4" fill="#f0e020" /><rect x="8" y="9" width="2.500" height="5" fill="#10c020" />
    <path d="M4 3h2M6 5v3" stroke="#888" />
  </svg>
);

function Header() {
  return (
    <>
      <div className="flex h-[23px] items-center bg-white pl-[2px] font-['Open_Sans'] text-[12px] text-black">
        <CaptureIcon />
        <span className="ml-[5px] tracking-[-0.12px] whitespace-nowrap">OrCAD Capture - Lite - [/ - (SCHEMATIC1 : PAGE1)]</span>
        <div className="ml-auto flex items-center pr-[19px] pb-[3px]">
          <Svg w={12} h={12}><path d="M1 6.500h10" stroke="#000" /></Svg>
          <Svg w={12} h={12} className="ml-[34px]"><path d="M1.500 3.500h7v7h-7zM3.500 3V1.500h7v7H9" stroke="#000" /></Svg>
          <Svg w={12} h={12} className="ml-[33px]"><path d="M1 1l10 10M11 1L1 11" stroke="#000" strokeWidth="1.100" /></Svg>
        </div>
      </div>
      <div className="flex h-[20px] items-center bg-[#f0f0f0] pl-[6px] font-['Open_Sans'] text-[12px] text-black">
        <PageIcon />
        <div className="ml-[10px] flex h-[20px] leading-[18px] tracking-[-0.35px]">
          {menus.map(([a, u, b, w]) => (
            <span key={u + b} className={`whitespace-pre ${w}`}>{a}<span className="underline underline-offset-2">{u}</span>{b}</span>
          ))}
        </div>
        <svg width="104" height="20" viewBox="0 0 104 20" className="ml-auto block">
          <text x="4" y="18.500" fontFamily="Open Sans" fontWeight="bold" fontSize="18.500" fill="#2b2b2b" textLength="83">cadence</text>
          <rect x="17" y="4" width="7" height="2" fill="#dd3a3a" />
          <text x="86" y="9.500" fontFamily="Open Sans" fontWeight="bold" fontSize="10.500" fill="#222">®</text>
        </svg>
        <div className="ml-[6px] flex gap-[2px] pr-[2px]">
          {["M2 8.500h6", "M1.500 5.500h5v4h-5zM3.500 4V2.500h5v4H7", "M2 2.500l6 6M8 2.500l-6 6"].map((d, i) => (
            <div key={d} className="flex h-[18px] w-[17px] items-center justify-center border border-[#e3e3e3] bg-white">
              <Svg w={10} h={11}><path d={d} stroke="#7f8a9a" strokeWidth={i === 1 ? 1.300 : 2.200} /></Svg>
            </div>
          ))}
        </div>
      </div>
      <div className="h-[3px] bg-[#c60000]" />
      <div className="flex h-[107px] flex-col border-b border-[#dcdcdc] bg-white font-['Liberation_Sans'] text-[12px] text-black">
        <div className="flex h-[35px] items-center pl-[7px]">
          <Icons list={row1a} />
          <Combo className="-ml-px tracking-[-0.5px]">VPULSE</Combo>
          <Icons list={row1b} cell="w-[29.050px]" />
          <Combo className="ml-[12px]" />
          <Svg w={20} h={20} className="ml-[7px]">
            <rect x="0" y="1" width="16" height="18" fill="#ddd" />
            <path d="M3 4h3v4H3zM10 4h3v4h-3zM2 8h5v4H2zM9 8h5v4H9zM1 12h6v5H1zM9 12h6v5H9zM7 9h2v4H7z" fill="#111" />
          </Svg>
          <Svg w={12} h={10} className="ml-[3px]"><path d="M1 2h9L5.500 7z" fill="#000" /></Svg>
          <Svg w={16} h={20} className="ml-[7px] drop-shadow-[0_0_1px_#999]"><path d="M12 3v14L4 10z" fill="#b4b9c6" stroke="#bbb" strokeWidth="2.500" /></Svg>
          <Svg w={16} h={20} className="ml-[13px] drop-shadow-[0_0_1px_#999]"><path d="M4 3v14l8-7z" fill="#a4a8ae" stroke="#bbb" strokeWidth="2.500" /></Svg>
        </div>
        <div className="flex h-[35px] items-start">
          <div className="flex h-[35px] w-[774px] shrink-0 items-center pl-[7px]">
            <Combo className="font-bold tracking-[-0.1px]">SCHEMATIC1-cv23dol</Combo>
            <Icons list={row2} hl={[8, 10]} cell="w-[29.050px]" />
          </div>
          <div className="h-px w-[381px] bg-[#dcdcdc]" />
        </div>
        <div className="flex h-[36px] items-start">
          <div className="flex h-[36px] w-[725px] shrink-0 items-center border-b border-[#dcdcdc] pl-[6px]">
            <Icons list={row3a} />
            <div className="w-[13px]" />
            <Icons list={row3b} />
          </div>
          <div className="h-px w-[49px] bg-[#dcdcdc]" />
        </div>
      </div>
    </>
  );
}

function Tabs() {
  const base = "flex items-center rounded-t-[4px] border border-black font-['DejaVu_Sans_Condensed','DejaVu_Sans'] text-[12px] whitespace-nowrap";
  return (
    <div className="flex h-[33px] items-end pl-[7px]">
      <div className={`${base} mb-[3px] h-[23px] w-[89px] bg-[#dcdcdc] pl-[26px] tracking-[-0.45px] text-[#6d6d6d]`}>Start Page</div>
      <div className={`${base} mb-[3px] ml-px h-[23px] w-[89px] bg-[#dcdcdc] pl-px tracking-[-0.45px] text-[#6d6d6d]`}>
        <svg width="16" height="14" viewBox="0 0 16 14" className="mr-[5px] block shrink-0">
          <rect x=".5" y=".5" width="15" height="13" fill="#fff" stroke="#000" />
          <rect x="1" y="1" width="14" height="2" fill="#0018e0" />
          <path d="M2 5h2M3 5v3M6 5h3M8 5v6M11 5v7M13 5v6M2 10h2M6 8h3M6 11h2M10 7h5" stroke="#000" strokeWidth="1.200" />
        </svg>
        cv23dobes*
      </div>
      <div className="mb-[3px] flex h-[25px] w-[92px] items-center rounded-t-[4px] border border-b-0 border-black border-t-black bg-[#f0f0f0] pl-[3px] font-['DejaVu_Sans_Condensed','DejaVu_Sans'] text-[12px] font-bold tracking-[-0.3px] text-black shadow-[inset_0_2px_0_#ffb6b6]">
        <PageIcon className="mr-[17px]" />
        PAGE1*
      </div>
      <div className={`${base} mb-[3px] h-[23px] w-[89px] bg-[#dcdcdc] pl-[18px] tracking-[-0.2px] text-[#6d6d6d]`}>SCHEMATI..*</div>
    </div>
  );
}

function Workspace() {
  return (
    <div className="flex w-[1561px] shrink-0 flex-col bg-[#f0f0f0]">
      <Tabs />
      <div className="mr-[6px] ml-[6px] flex h-[744px] flex-col border-t-2 border-l-2 border-[#8a8a8a]">
        <div className="flex">
          <Schematic />
          <div className="flex h-[725px] w-[16px] flex-col items-center bg-[#f0f0f0]">
            <div className="h-[7px] w-full border-r-2 border-b-2 border-[#6e6e6e] bg-[#f6f6f6]" />
            <div className="mt-[4px]"><Chevron d="up" /></div>
            <div className="mt-[98px] h-[178px] w-[15px] bg-[#cdcdcd]" />
            <div className="mt-auto pb-[4px]"><Chevron /></div>
          </div>
        </div>
        <div className="flex h-[17px] items-start border-b border-white">
          <div className="h-[16px] w-[7px] border-r-2 border-b-2 border-[#6e6e6e] bg-[#f6f6f6]" />
          <div className="flex h-[16px] w-[1522px] items-center">
            <div className="w-[333px] pl-[4px]"><Chevron d="left" /></div>
            <div className="h-[15px] w-[613px] self-start bg-[#cdcdcd]" />
            <div className="ml-auto pr-[4px]"><Chevron d="right" /></div>
          </div>
          <Svg w={16} h={16}>
            <path d="M12 5h2v2h-2zM9 8h2v2H9zM12 8h2v2h-2zM6 11h2v2H6zM9 11h2v2H9zM12 11h2v2h-2z" fill="#bdbdbd" />
          </Svg>
        </div>
      </div>
      <div className="mt-auto h-[2px] bg-[#9a9a9a]" />
    </div>
  );
}

function Log() {
  return (
    <div className="flex h-[73px] w-[1561px] flex-col bg-white pt-[3px]">
      <div className="flex h-[65px]">
        <div className="flex w-[19px] flex-col items-center pt-[2px] pr-[3px] pl-[1px]">
          <div className="ml-[4px] flex h-[11px] w-[11px] items-center justify-center border-r border-b border-[#777] bg-[#f0f0f0]"><Svg w={8} h={8}><path d="M1 1l6 6M7 1L1 7" stroke="#000" strokeWidth="1.700" /></Svg></div>
          <div className="mt-px ml-[4px] flex h-[12px] w-[11px] items-center justify-center border-r border-b border-[#777] bg-[#f0f0f0]"><Svg w={8} h={8}><path d="M3 1v6l3-3z" fill="#888" /></Svg></div>
          <div className="mt-[2px] ml-[3px] h-[35px] w-[5px] border-x border-[#a5a5a5]" />
        </div>
        <div className="flex w-[1538px] border-t-2 border-r border-b border-l border-[#dcdcdc] border-t-[#6e6e6e] border-l-[#6e6e6e]">
          <div className="flex-1 pl-[8px] font-['Liberation_Sans'] text-[14px] leading-[16px] whitespace-pre text-black">
            <div>INFO(ORCAP-2191): Creating PSpice Netlist</div>
            <div>INFO(ORNET-1041): Writing PSpice Flat Netlist C:\Users\Dobes38205\Documents\US\cv23\cv23dobes-PSpiceFiles\SCHEMATIC1\SCHEMATIC1.net</div>
            <div>INFO(ORNET-1156): PSpice netlist generation complete</div>
          </div>
          <div className="flex w-[16px] flex-col items-center bg-[#f0f0f0] py-[4px]">
            <Chevron d="up" />
            <div className="mt-[15px] h-[17px] w-[15px] bg-[#cdcdcd]" />
            <div className="mt-auto"><Chevron /></div>
          </div>
        </div>
      </div>
      <div className="mt-[2px] h-[3px] border-b border-[#8a8a8a] bg-[#e2e2e2]" />
    </div>
  );
}

const Task = ({ children, w = "w-[48px]", bar, on }) => (
  <div className={`flex h-[43px] shrink-0 flex-col items-center ${w} ${on ? "bg-[#3a3d42]" : ""}`}>
    <div className="flex flex-1 items-center justify-center pt-[2px]">{children}</div>
    {bar && <div className={`h-[2px] bg-[#76b9ed] ${on ? "w-full" : "w-[40px]"}`} />}
  </div>
);

function Taskbar() {
  return (
    <div className="flex h-[43px] bg-[#050a10] font-['Open_Sans'] text-[12px] text-white">
      <Task>
        <Svg w={16} h={16}><path d="M0 2.300L6.500 1.400v6.200H0zM7.500 1.250L16 0v7.600H7.500zM0 8.500h6.500v6.200L0 13.800zM7.500 8.500H16V16l-8.500-1.200z" fill="#fff" /></Svg>
      </Task>
      <Task>
        <Svg w={17} h={17}><circle cx="10.500" cy="6" r="5" stroke="#fff" strokeWidth="1.300" /><path d="M7 10L1 16" stroke="#fff" strokeWidth="1.500" /></Svg>
      </Task>
      <Task>
        <Svg w={17} h={17}><path d="M1 1v2h10V1M1.500 6h9v6h-9zM1 17v-2h10v2M14.500 1v3M14.500 9v8" stroke="#fff" strokeWidth="1.200" /><rect x="13.500" y="5" width="3" height="3" fill="#fff" /></Svg>
      </Task>
      <Task w="ml-[2px] w-[50px]" bar>
        <Svg w={22} h={22}><path d="M1 11C2 4 6 1 11.500 1 17 1 21 5 21 10.500V13H8c0 3 3 5 6 5 2 0 4-.6 5.500-1.500v4C17.500 21.500 15 22 12.500 22 7 22 3.800 19 3.800 14.500c0-3 1.600-5.500 4.500-7C5.500 7.500 2.500 8.500 1 11zM8.200 9.500H15c0-2.500-1.200-4-3.300-4S8.500 7 8.200 9.500z" fill="#0a78d7" /></Svg>
      </Task>
      <Task w="w-[48px]" bar>
        <Svg w={22} h={20}><path d="M0 2h8l2 2h11v15H0z" fill="#f3cf6a" /><path d="M0 5h21v14H0z" fill="#fde49b" /><path d="M4 19v-8h13v8h-3.500v-4h-6v4z" fill="#3fb4e8" /></Svg>
      </Task>
      <Task w="ml-px w-[48px]" bar on><CaptureIcon s={23} /></Task>
      <Task w="w-[50px]" bar><ScopeIcon s={23} /></Task>
      <div className="ml-auto flex items-center">
        <Svg w={16} h={18}><circle cx="10.500" cy="4.500" r="3" stroke="#fff" strokeWidth="1.200" /><path d="M7 9c1-1 2-1.500 3.500-1.500S14 10 14.500 13" stroke="#fff" strokeWidth="1.200" /><circle cx="5" cy="9.500" r="2.400" stroke="#fff" strokeWidth="1.200" fill="#050a10" /><path d="M1 17c.5-4 2-5 4-5s3.500 1 4 5" stroke="#fff" strokeWidth="1.200" /></Svg>
        <Svg w={13} h={9} className="ml-[25px]"><path d="M1 7.500l5.500-6 5.500 6" stroke="#fff" strokeWidth="1.300" /></Svg>
        <Svg w={18} h={16} className="ml-[8px]"><path d="M6 2.500h10.500v9H3M6 14.500h8M9.500 11.500v3M1.500 1.500h4v4h-4zM3.500 5.500v6" stroke="#fff" strokeWidth="1.200" /></Svg>
        <Svg w={18} h={18} className="ml-[6px]"><path d="M1 6h2l3-4v13l-3-4H1z" stroke="#fff" strokeWidth="1.200" /><circle cx="12" cy="12.500" r="4.500" fill="#d62030" /><path d="M10.300 10.800l3.400 3.400M13.700 10.800l-3.400 3.400" stroke="#fff" strokeWidth="1.200" /></Svg>
        <div className="ml-[6px] flex w-[60px] flex-col items-center text-[12px] leading-[18px] tracking-[-0.6px]">
          <span>10:48</span>
          <span>25.03.2019</span>
        </div>
        <Svg w={28} h={26} className="ml-[14px]"><path d="M2 3h16v13h-6v4l-4-4H2z" fill="#fff" /><path d="M5 6.500h10M5 9.500h10M5 12.500h6" stroke="#111" strokeWidth="1.200" /><circle cx="18" cy="18" r="7.500" fill="#222529" stroke="#999" /><text x="18" y="22" textAnchor="middle" fontFamily="Open Sans" fontSize="12" fontWeight="bold" fill="#fff">1</text></Svg>
        <div className="mr-[4px] ml-[9px] h-[40px] w-px bg-[#666]" />
      </div>
    </div>
  );
}

export default function App() {
  return (
    <div className="flex h-[1080px] w-[1920px] flex-col overflow-hidden bg-white antialiased">
      <Header />
      <div className="flex h-[863px] shrink-0">
        <div className="flex w-[1561px] flex-col">
          <div className="flex h-[784px]"><Workspace /></div>
          <div className="h-[4px] bg-[#d6dced]" />
          <div className="h-[2px] bg-[#6e6e6e]" />
          <Log />
        </div>
        <div className="flex w-[6px] shrink-0">
          <div className="w-px bg-[#9a9a9a]" />
          <div className="w-[3px] bg-[#d6dced]" />
          <div className="w-[2px] bg-[#6e6e6e]" />
        </div>
        <PlacePart />
        <div className="w-px bg-[#a0a0a0]" />
        <div className="flex flex-1 flex-col pt-[7px]">
          <div className="ml-[5px] grid grid-cols-[29px_29px]">
            {palette.map((ic, i) => (
              <div key={i} className={`flex h-[31px] items-center justify-center ${i < 2 ? "border border-[#99d1ff] bg-[#cce8ff]" : ""}`}>
                <svg width="24" height="24" viewBox="0 0 24 24" fill="none" className="drop-shadow-[0_0_1px_rgba(90,90,90,0.55)]">{ic}</svg>
              </div>
            ))}
          </div>
          <div className="mt-[7px] ml-[2px] h-px bg-[#dcdcdc]" />
        </div>
      </div>
      <div className="flex h-[21px] shrink-0 items-stretch border-t border-[#dcdcdc] bg-white pt-[3px] font-['Open_Sans'] text-[12px] leading-[17px] tracking-[-0.4px] whitespace-nowrap text-black">
        <div className="ml-[1273px] w-[428px] border-l border-[#dcdcdc] pl-[4px]">0 items selected</div>
        <div className="flex flex-1 border-x border-[#dcdcdc] pl-[4px]">
          <span className="w-[78px]">Scale=380%</span>
          <span className="w-[42px]">X=5.70</span>
          <span>Y=2.60</span>
        </div>
      </div>
      <Taskbar />
    </div>
  );
}
